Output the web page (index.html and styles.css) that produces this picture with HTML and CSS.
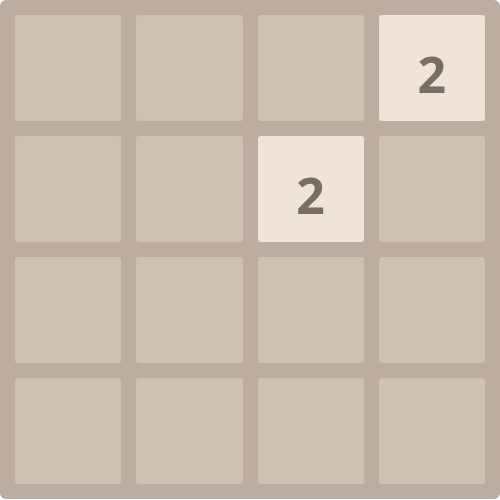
FILE: index.html
```html
<!DOCTYPE html>
<html lang="en">

<head>
    <meta charset="UTF-8">
    <meta name="viewport" content="width=device-width, initial-scale=1.0">
    <title>2048</title>
    <link rel="stylesheet" href="styles.css">
</head>

<body>

    <div id="board">
        <div class="cell"></div>
        <div class="cell"></div>
        <div class="cell"></div>
        <div class="cell tile-2">2</div>

        <div class="cell"></div>
        <div class="cell"></div>
        <div class="cell tile-2">2</div>
        <div class="cell"></div>

        <div class="cell"></div>
        <div class="cell"></div>
        <div class="cell"></div>
        <div class="cell"></div>

        <div class="cell"></div>
        <div class="cell"></div>
        <div class="cell"></div>
        <div class="cell"></div>
    </div>

</body>

</html>
```

FILE: styles.css
```css
body {
    margin: 0;
    font-family: "Open Sans", "Liberation Sans", sans-serif;
}

#board {
    width: 500px;
    height: 499px;
    box-sizing: border-box;
    padding: 15px;
    display: grid;
    grid-template-columns: repeat(4, 1fr);
    grid-template-rows: repeat(4, 1fr);
    gap: 15px;
    background-color: #bbada0;
    border-radius: 6px;
}

.cell {
    background-color: #cdc1b4;
    border-radius: 3px;
    display: flex;
    align-items: center;
    justify-content: center;
}

.tile-2 {
    background-color: #eee4da;
    color: #776e65;
    font-size: 50px;
    font-weight: bold;
    padding-top: 12px;
    box-sizing: border-box;
}
```
